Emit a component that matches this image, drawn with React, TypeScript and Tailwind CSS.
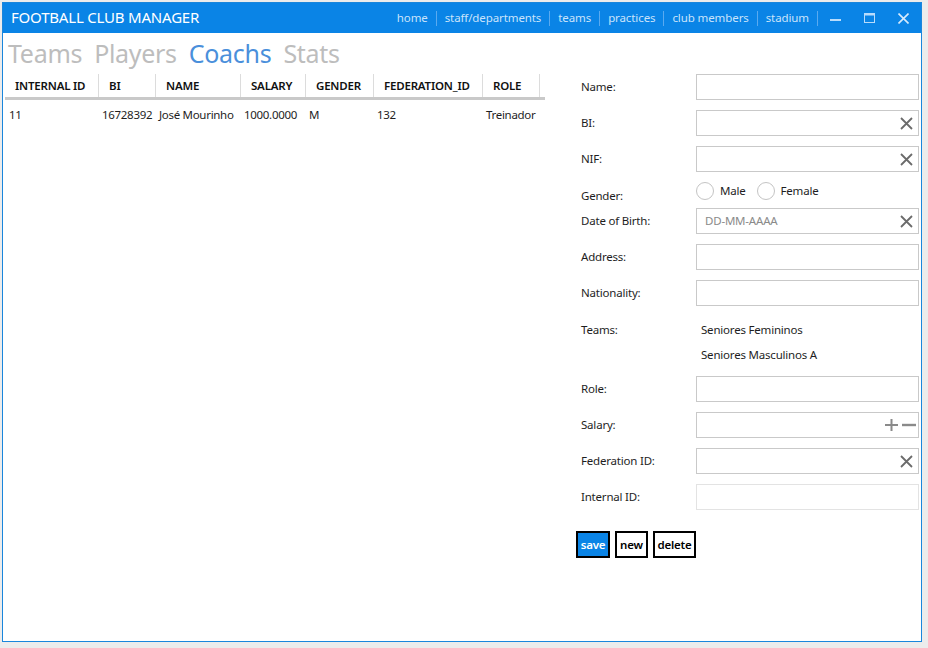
import React from "react";

const font = { fontFamily: '"Noto Sans", "Open Sans", sans-serif' };

function XIcon() {
  return (
    <svg width="13" height="13" viewBox="0 0 13 13" className="shrink-0">
      <path d="M1 1 L12 12 M12 1 L1 12" stroke="#6b6b6b" strokeWidth="1.8" />
    </svg>
  );
}

function Field({ label, icon, disabled, placeholder }: { label: string; icon?: "x" | "pm"; disabled?: boolean; placeholder?: string }) {
  return (
    <div className="flex items-center h-[26px]">
      <div className="w-[120px] pl-[5px] text-[11.5px] tracking-[-0.2px] text-[#1e1e1e]">{label}</div>
      <div
        className={`flex-1 h-[26px] border ${disabled ? "border-[#e3e3e3]" : "border-[#c9c9c9]"} flex items-center pl-[8px] pr-[5px] text-[11.5px] tracking-[-0.2px] text-[#8a8a8a] justify-between`}
      >
        <span>{placeholder ?? ""}</span>
        {icon === "x" && <XIcon />}
        {icon === "pm" && (
          <svg width="32" height="14" viewBox="0 0 32 14" className="-mr-[3px]">
            <path d="M1 7 H14 M7.5 1 V13" stroke="#8a8a8a" strokeWidth="2" />
            <path d="M18 7 H32" stroke="#8a8a8a" strokeWidth="2.4" />
          </svg>
        )}
      </div>
    </div>
  );
}

export default function App() {
  const cols = [
    { h: "INTERNAL ID", w: 93, d: "11" },
    { h: "BI", w: 57, d: "16728392" },
    { h: "NAME", w: 85, d: "José Mourinho" },
    { h: "SALARY", w: 65, d: "1000.0000" },
    { h: "GENDER", w: 68, d: "M" },
    { h: "FEDERATION_ID", w: 109, d: "132" },
    { h: "ROLE", w: 57, d: "Treinador" },
  ];
  const nav = ["home", "staff/departments", "teams", "practices", "club members", "stadium"];
  return (
    <div className="w-[928px] h-[648px] bg-[#ececec] pl-[2px] pt-[2px] overflow-hidden" style={font}>
      <div className="w-[920px] h-[640px] bg-white border border-[#1a86dc] flex flex-col">
        {/* title bar */}
        <div className="h-[30px] bg-[#0a84e6] flex items-center justify-between shrink-0">
          <div className="pl-[8px] text-[15px] text-white tracking-[-0.2px] pb-[1px]">FOOTBALL CLUB MANAGER</div>
          <div className="flex items-center h-full text-[11.5px] tracking-[-0.1px] text-[#c9e3fb]">
            {nav.map((n) => (
              <div key={n} className="flex items-center">
                <span className="px-[8px]">{n}</span>
                <span className="w-px h-[15px] bg-[#5aaaf0]" />
              </div>
            ))}
            <div className="w-[34px] flex justify-center">
              <div className="w-[11px] h-[2px] bg-[#b9dcfb] mt-[4px]" />
            </div>
            <div className="w-[34px] flex justify-center">
              <svg width="11" height="10" viewBox="0 0 11 10">
                <rect x="0.5" y="0.5" width="10" height="9" fill="none" stroke="#b9dcfb" />
                <rect x="0.5" y="0.5" width="10" height="2" fill="#b9dcfb" />
              </svg>
            </div>
            <div className="w-[34px] flex justify-center mr-[1px]">
              <svg width="11" height="11" viewBox="0 0 11 11">
                <path d="M0.5 0.5 L10.5 10.5 M10.5 0.5 L0.5 10.5" stroke="#d7ebfc" strokeWidth="1.6" />
              </svg>
            </div>
          </div>
        </div>

        {/* tabs */}
        <div className="h-[41px] flex items-center gap-[12px] pl-[5px] text-[25px] tracking-[-0.3px] text-[#bdbdbd] leading-none pb-[1px]">
          <span>Teams</span>
          <span>Players</span>
          <span className="text-[#4a8fdb]">Coachs</span>
          <span>Stats</span>
        </div>

        <div className="flex flex-1">
          {/* table */}
          <div className="w-[573px] pl-[2px]">
            <div className="flex w-[540px] h-[26px] border-b-[3px] border-[#c9c9c9]">
              {cols.map((c, i) => (
                <div
                  key={c.h}
                  className={`h-full flex items-center text-[11.5px] tracking-[-0.2px] font-semibold text-[#111] pl-[10px] ${i > 0 ? "border-l border-[#dcdcdc]" : ""}`}
                  style={{ width: c.w }}
                >
                  {c.h}
                </div>
              ))}
              <div className="flex-1 h-full border-l border-[#dcdcdc]" />
            </div>
            <div className="flex h-[30px] items-center">
              {cols.map((c) => (
                <div key={c.h} className="pl-[4px] text-[11.5px] tracking-[-0.3px] text-[#1e1e1e] whitespace-nowrap" style={{ width: c.w }}>
                  {c.d}
                </div>
              ))}
            </div>
          </div>

          {/* form */}
          <div className="flex-1 pr-[2px] flex flex-col gap-[10px]">
            <Field label="Name:" />
            <Field label="BI:" icon="x" />
            <Field label="NIF:" icon="x" />
            <div className="flex h-[16px]">
              <div className="w-[120px] pl-[5px] text-[11.5px] tracking-[-0.2px] text-[#1e1e1e] pt-[5px]">Gender:</div>
              <div className="flex items-start text-[11.5px] tracking-[-0.2px] text-[#1e1e1e]">
                <div className="flex items-center gap-[6px]">
                  <span className="w-[18px] h-[18px] rounded-full border border-[#c4c4c4]" />
                  <span>Male</span>
                </div>
                <div className="flex items-center gap-[6px] ml-[11px]">
                  <span className="w-[18px] h-[18px] rounded-full border border-[#c4c4c4]" />
                  <span>Female</span>
                </div>
              </div>
            </div>
            <Field label="Date of Birth:" icon="x" placeholder="DD-MM-AAAA" />
            <Field label="Address:" />
            <Field label="Nationality:" />
            <div className="flex h-[50px] pt-[5px] text-[11.5px] tracking-[-0.2px] text-[#1e1e1e] leading-[17px]">
              <div className="w-[120px] pl-[5px]">Teams:</div>
              <div className="flex flex-col gap-[8px] pl-[5px]">
                <span>Seniores Femininos</span>
                <span>Seniores Masculinos A</span>
              </div>
            </div>
            <Field label="Role:" />
            <Field label="Salary:" icon="pm" />
            <Field label="Federation ID:" icon="x" />
            <Field label="Internal ID:" disabled />
            <div className="flex gap-[5px] mt-[11px] text-[11.5px] tracking-[-0.2px]">
              <div className="h-[27px] w-[34px] flex items-center justify-center border-2 border-black bg-[#0a84e6] text-white font-semibold">save</div>
              <div className="h-[27px] w-[33px] flex items-center justify-center border-2 border-black bg-white text-black font-semibold">new</div>
              <div className="h-[27px] w-[43px] flex items-center justify-center border-2 border-black bg-white text-black font-semibold">delete</div>
            </div>
          </div>
        </div>
      </div>
    </div>
  );
}
